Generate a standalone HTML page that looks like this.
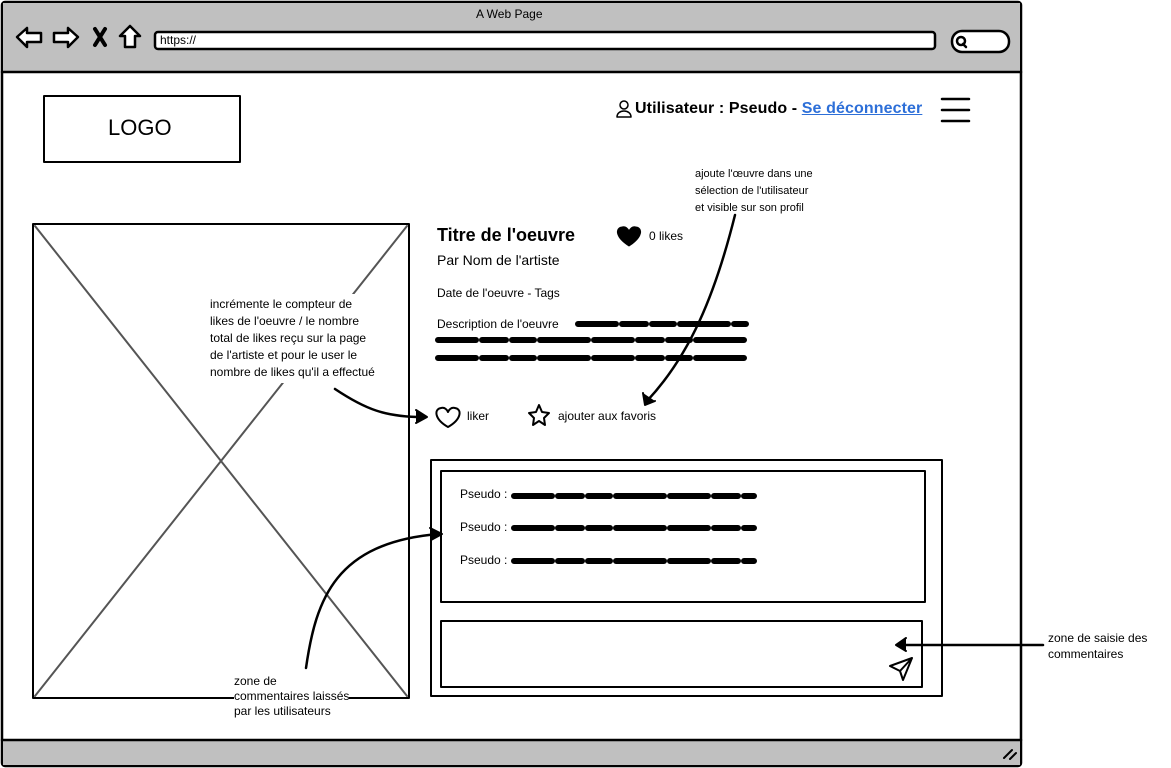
<!DOCTYPE html>
<html><head><meta charset="utf-8"><style>
body{margin:0;width:1171px;height:768px;background:#fff;font-family:"Liberation Sans",sans-serif;overflow:hidden;position:relative}
.t{position:absolute;color:#000;white-space:nowrap}
</style></head><body>
<svg width="1171" height="768" style="position:absolute;left:0;top:0" fill="none" stroke="#000" stroke-linecap="round" stroke-linejoin="round">
<rect x="2" y="2" width="1019" height="764" rx="3" fill="#fff" stroke-width="2.5"/>
<rect x="3" y="3" width="1017" height="69" fill="#c0c0c0" stroke="none"/>
<line x1="2" y1="72" x2="1021" y2="72" stroke-width="2.5"/>
<rect x="3" y="740" width="1017" height="25" fill="#c0c0c0" stroke="none"/>
<line x1="2" y1="740" x2="1021" y2="740" stroke-width="2.5"/>
<path d="M1004 758l8-8M1010 759l6-6" stroke-width="2"/>
<path d="M17 37l10-9v5h14v9h-14v5z" fill="#fff" stroke-width="2.5"/>
<path d="M78 37l-10-9v5h-14v9h14v5z" fill="#fff" stroke-width="2.5"/>
<path d="M95 29l10 16M105 29l-10 16" stroke-width="4"/>
<path d="M130 26l-10 10h5v11h10v-11h5z" fill="#fff" stroke-width="2.5"/>
<rect x="155" y="32" width="780" height="17" rx="3" fill="#fff" stroke-width="2.5"/>
<rect x="952" y="31" width="57" height="21" rx="10" fill="#fff" stroke-width="2.5"/>
<circle cx="961" cy="41" r="4" stroke-width="2.5"/><path d="M963 44l3 3" stroke-width="2.5"/>
<rect x="44" y="96" width="196" height="66" stroke-width="2"/>
<circle cx="624" cy="105" r="4" stroke-width="1.5"/><path d="M617 117c0-8 14-8 14 0z" stroke-width="1.5"/>
<path d="M942 99h27M942 110h27M942 121h27" stroke-width="2.5"/>
<rect x="33" y="224" width="376" height="474" stroke-width="2"/>
<path d="M35 226L407 696M407 226L35 696" stroke="#555" stroke-width="2"/>
<path d="M629 246c-14-9-14-18-7-19 4-1 6 2 7 4 1-2 3-5 7-4 7 1 7 10-7 19z" fill="#000" stroke-width="1"/>
<g stroke-width="6" stroke-dasharray="38 6 24 6 22 6 48 6">
<path d="M578 324h168"/><path d="M438 340h308"/><path d="M438 358h308"/>
<path d="M514 496h240"/><path d="M514 528h240"/><path d="M514 561h240"/>
</g>
<path d="M448 427c-14-8-14-18-7-19 4-1 6 2 7 4 1-2 3-5 7-4 7 1 7 11-7 19z" stroke-width="2"/>
<path d="M539 405l3 7 7 1-5 5 1 7-6-4-6 4 1-7-5-5 7-1z" stroke-width="2"/>
<rect x="431" y="460" width="511" height="236" stroke-width="2"/>
<rect x="441" y="471" width="484" height="131" stroke-width="2"/>
<rect x="441" y="621" width="481" height="66" stroke-width="2"/>
<path d="M890 666l22-8-9 22-3-9z M900 671l12-13" stroke-width="2"/>
<path d="M335 389c30 20 50 28 88 28" stroke-width="2.5"/><path d="M416 410l11 7-11 6" fill="#000" stroke-width="2"/>
<path d="M735 215c-20 80-45 140-88 186" stroke-width="2.5"/><path d="M643 393l2 12 10-4" fill="#000" stroke-width="2"/>
<path d="M306 668c10-70 30-125 132-134" stroke-width="2.5"/><path d="M430 528l12 6-11 6" fill="#000" stroke-width="2"/>
<path d="M1043 645h-140" stroke-width="2.5"/><path d="M906 638l-10 7 10 6" fill="#000" stroke-width="2"/>
</svg>
<div class="t" style="left:476px;top:7px;font-size:12px">A Web Page</div>
<div class="t" style="left:160px;top:33px;font-size:12px">https://</div>
<div class="t" style="left:108px;top:115px;font-size:22px">LOGO</div>
<div class="t" style="left:635px;top:100px;font-size:16px;font-weight:bold;letter-spacing:0.1px">Utilisateur : Pseudo - <span style="color:#2d6fd8;text-decoration:underline;font-weight:bold">Se déconnecter</span></div>
<div class="t" style="left:695px;top:166px;font-size:11px;line-height:17px">ajoute l'œuvre dans une<br>sélection de l'utilisateur<br>et visible sur son profil</div>
<div class="t" style="left:437px;top:225px;font-size:18px;font-weight:bold">Titre de l'oeuvre</div>
<div class="t" style="left:649px;top:229px;font-size:12px">0 likes</div>
<div class="t" style="left:437px;top:252px;font-size:14px">Par Nom de l'artiste</div>
<div class="t" style="left:437px;top:286px;font-size:12px">Date de l'oeuvre - Tags</div>
<div class="t" style="left:437px;top:317px;font-size:12px">Description de l'oeuvre</div>
<div class="t" style="left:208px;top:294px;font-size:12px;line-height:17px;background:#fff;padding:2px 2px">incrémente le compteur de<br>likes de l'oeuvre / le nombre<br>total de likes reçu sur la page<br>de l'artiste et pour le user le<br>nombre de likes qu'il a effectué</div>
<div class="t" style="left:467px;top:409px;font-size:12px">liker</div>
<div class="t" style="left:558px;top:409px;font-size:12px">ajouter aux favoris</div>
<div class="t" style="left:460px;top:487px;font-size:12px">Pseudo :</div>
<div class="t" style="left:460px;top:520px;font-size:12px">Pseudo :</div>
<div class="t" style="left:460px;top:553px;font-size:12px">Pseudo :</div>
<div class="t" style="left:234px;top:674px;font-size:12px;line-height:15px;background:#fff">zone de<br>commentaires laissés<br>par les utilisateurs</div>
<div class="t" style="left:1048px;top:630px;font-size:12px;line-height:16px">zone de saisie des<br>commentaires</div>
</body></html>
